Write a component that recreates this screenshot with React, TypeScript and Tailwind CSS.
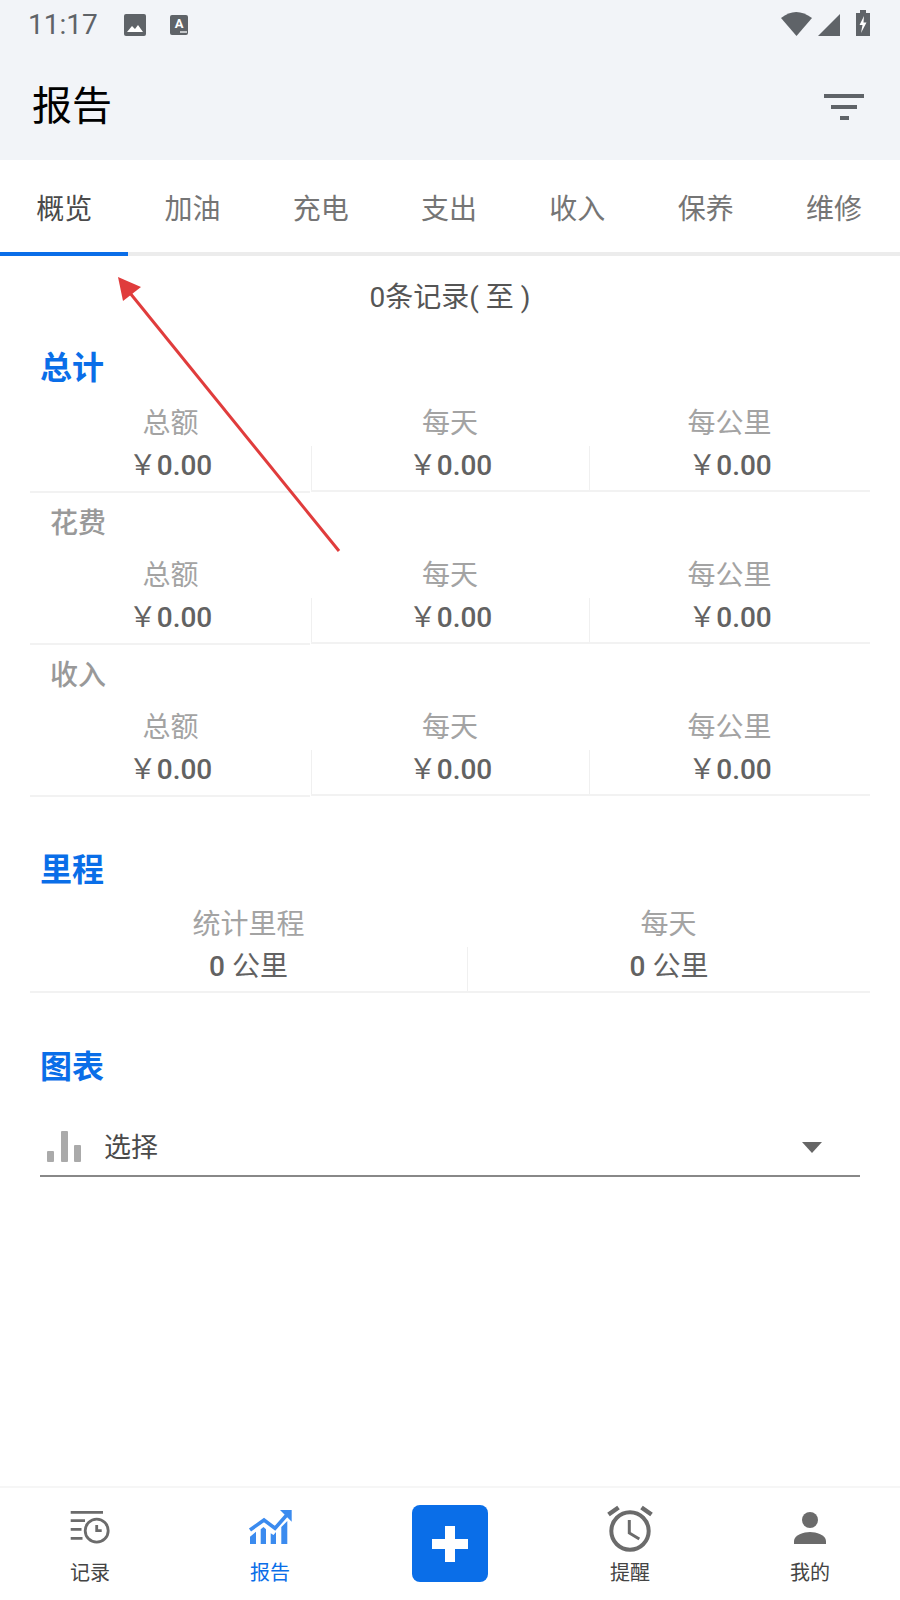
import React from 'react';

const tabs = ['概览', '加油', '充电', '支出', '收入', '保养', '维修'];

const Money: React.FC = () => (
    <>
        <span className="font-normal">￥</span>0.00
    </>
);

const Km: React.FC = () => (
    <>
        0 <span className="font-normal">公里</span>
    </>
);

const StatCell: React.FC<{ label: string; className: string; children: React.ReactNode }> = ({ label, className, children }) => (
    <div className={`flex flex-col items-center ${className}`}>
        <div className="h-[48px] w-full text-center text-[28px] leading-[52px] text-[#a3a3a3]">{label}</div>
        <div className="h-[44px] w-full border-l border-[#f0f0f0] text-center text-[28px] leading-[40px] font-medium text-[#626262]">
            {children}
        </div>
        <div className="h-[2px] w-full bg-[#f2f2f2]" />
    </div>
);

const MoneyRow: React.FC = () => (
    <div className="mx-[30px] flex h-[95px] w-[840px]">
        <div className="flex w-[281px] flex-col">
            <div className="h-[48px] text-center text-[28px] leading-[52px] text-[#a3a3a3]">总额</div>
            <div className="h-[45px] text-center text-[28px] leading-[40px] font-medium text-[#626262]">
                <Money />
            </div>
            <div className="mr-[1px] h-[2px] bg-[#f2f2f2]" />
        </div>
        <StatCell label="每天" className="w-[278px]">
            <Money />
        </StatCell>
        <StatCell label="每公里" className="w-[281px]">
            <Money />
        </StatCell>
    </div>
);

const SectionTitle: React.FC<{ children: React.ReactNode; className?: string }> = ({ children, className }) => (
    <div className={`h-[60px] pl-[40px] text-[32px] leading-[60px] font-bold text-[#0a6ee8] ${className ?? ''}`}>{children}</div>
);

const SubTitle: React.FC<{ children: React.ReactNode }> = ({ children }) => (
    <div className="h-[57px] pl-[50px] text-[28px] leading-[62px] font-medium text-[#999999]">{children}</div>
);

const NavItem: React.FC<{ label: string; active?: boolean; children: React.ReactNode }> = ({ label, active, children }) => (
    <div className="flex w-[180px] flex-col items-center">
        <svg width="50" height="50" viewBox="0 0 50 50">{children}</svg>
        <div className={`mt-[4px] text-[20px] leading-[28px] ${active ? 'text-[#0a6ee8]' : 'text-[#444444]'}`}>{label}</div>
    </div>
);

const App: React.FC = () => {
    return (
        <div className="relative flex h-[1600px] w-[900px] flex-col overflow-hidden bg-white font-['Roboto','Noto_Sans_CJK_SC',sans-serif]">
            <header className="h-[160px] bg-[#f2f4f8]">
                <div className="flex h-[50px] items-center pl-[28px] pr-[30px] text-[#5f6368]">
                    <span className="w-[96px] text-[28px] leading-[54px]">11:17</span>
                    <svg width="22" height="22" viewBox="0 0 22 22" className="mt-[-1px]">
                        <rect width="22" height="22" rx="2" fill="#5f6368" />
                        <path d="M3 18 L8 12 L11 15 L14 11 L19 18 Z" fill="#fff" />
                    </svg>
                    <div className="relative ml-[24px] mt-[-1px] flex h-[20px] w-[18px] justify-center rounded-[2px] bg-[#5f6368] text-[13px] leading-[18px] font-bold text-white">
                        A
                        <span className="absolute bottom-[2px] right-[1px] h-[2px] w-[7px] bg-[#c5c7ca]" />
                    </div>
                    <div className="flex-1" />
                    <svg width="90" height="30" viewBox="0 0 90 30" className="mt-[-1px]">
                        <path d="M1 8 Q16 -4 32 8 L16.5 26 Z" fill="#5f6368" />
                        <path d="M38 26 L60 4 V26 Z" fill="#5f6368" />
                        <path d="M76 3 H80 V0 H86 V3 H90 V26 H76 Z" fill="#5f6368" />
                        <path d="M84 6 L79.5 15 H82.5 L81 23 L86.5 12.5 H83.5 Z" fill="#fff" />
                    </svg>
                </div>
                <div className="flex h-[110px] items-center justify-between pl-[32px] pr-[36px]">
                    <h1 className="mt-[4px] text-[40px] leading-[50px] font-normal text-black">报告</h1>
                    <svg width="40" height="26" viewBox="0 0 40 26" className="mt-[4px]">
                        <rect x="0" y="0" width="40" height="4" fill="#5f6368" />
                        <rect x="7" y="11" width="26" height="4" fill="#5f6368" />
                        <rect x="16" y="22" width="9" height="4" fill="#5f6368" />
                    </svg>
                </div>
            </header>

            <nav className="flex h-[96px] border-b-4 border-[#ececec]">
                {tabs.map((tab, i) => (
                    <div key={tab} className={`relative w-[128.3px] text-center text-[28px] leading-[100px] ${i === 0 ? 'text-[#4a4a4a]' : 'text-[#757575]'}`}>
                        {tab}
                        {i === 0 && <span className="absolute bottom-[-4px] left-0 h-[4px] w-full bg-[#0a6ee8]" />}
                    </div>
                ))}
            </nav>

            <main className="flex-1">
                <div className="h-[82px] text-center text-[28px] leading-[84px] text-[#555555]">0条记录( 至 )</div>

                <SectionTitle>总计</SectionTitle>
                <MoneyRow />
                <SubTitle>花费</SubTitle>
                <MoneyRow />
                <SubTitle>收入</SubTitle>
                <MoneyRow />

                <SectionTitle className="mt-[41px] pt-[2px]">里程</SectionTitle>
                <div className="mx-[30px] flex h-[95px] w-[840px]">
                    <div className="flex w-[437px] flex-col">
                        <div className="h-[49px] text-center text-[28px] leading-[54px] text-[#a3a3a3]">统计里程</div>
                        <div className="h-[44px] text-center text-[28px] leading-[40px] font-medium text-[#626262]">
                            <Km />
                        </div>
                        <div className="h-[2px] bg-[#f2f2f2]" />
                    </div>
                    <div className="flex w-[403px] flex-col">
                        <div className="h-[49px] text-center text-[28px] leading-[54px] text-[#a3a3a3]">每天</div>
                        <div className="h-[44px] border-l border-[#f0f0f0] text-center text-[28px] leading-[40px] font-medium text-[#626262]">
                            <Km />
                        </div>
                        <div className="h-[2px] bg-[#f2f2f2]" />
                    </div>
                </div>

                <SectionTitle className="mt-[43px] pt-[1px]">图表</SectionTitle>
                <div className="ml-[40px] flex h-[81px] w-[820px] items-center border-b-2 border-[#888888]">
                    <svg width="36" height="32" viewBox="0 0 36 32" className="ml-[6px] mt-[22px]">
                        <rect x="1" y="20" width="7" height="11" rx="1" fill="#aaaaaa" />
                        <rect x="15" y="0" width="7" height="31" rx="1" fill="#aaaaaa" />
                        <rect x="28" y="14" width="7" height="17" rx="1" fill="#aaaaaa" />
                    </svg>
                    <span className="ml-[22px] mt-[24px] text-[27px] leading-[40px] text-[#4a4a4a]">选择</span>
                    <div className="flex-1" />
                    <svg width="20" height="11" viewBox="0 0 20 11" className="mr-[38px] mt-[24px]">
                        <path d="M0 0 H20 L10 11 Z" fill="#666666" />
                    </svg>
                </div>
            </main>

            <footer className="flex h-[114px] border-t-2 border-[#f6f6f6] pt-[17px]">
                <NavItem label="记录">
                    <g stroke="#6b6b6b" strokeWidth="2.8" fill="none">
                        <path d="M5.7 7.3 H38 M5.7 15.7 H20 M5.7 24.3 H16.5 M5.7 33.3 H17.5" />
                        <circle cx="31.7" cy="25.7" r="11.5" fill="#fff" />
                        <path d="M31.7 20 V25.7 H36.7" />
                    </g>
                </NavItem>
                <NavItem label="报告" active>
                    <g fill="#3b8bef">
                        <path d="M5 31.7 L11 26.7 V39 H5 Z" />
                        <path d="M15.7 24.3 L18.5 22 L21 24.3 V39 H15.7 Z" />
                        <path d="M25.7 28.3 L28.5 30 L31 27 V39 H25.7 Z" />
                        <path d="M36.3 22 L42.3 16 V39 H36.3 Z" />
                        <path d="M35 5 H46.7 V16.7 Z" />
                    </g>
                    <path d="M5 25 L19 15 L30 23.3 L43.3 8.3" stroke="#3b8bef" strokeWidth="3.6" fill="none" />
                </NavItem>
                <div className="flex w-[180px] justify-center">
                    <div className="flex h-[77px] w-[76px] items-center justify-center rounded-[8px] bg-[#0a6ee8]">
                        <svg width="36" height="36" viewBox="0 0 36 36">
                            <path d="M13 0 H23 V13 H36 V23 H23 V36 H13 V23 H0 V13 H13 Z" fill="#fff" />
                        </svg>
                    </div>
                </div>
                <NavItem label="提醒">
                    <g stroke="#6b6b6b" fill="none">
                        <circle cx="25" cy="26" r="18.7" strokeWidth="4" />
                        <path d="M3.5 9.5 L13.5 2.5 M46.5 9.5 L36.5 2.5" strokeWidth="4.5" />
                        <path d="M24.3 15 V28 L34.3 34" strokeWidth="3" />
                    </g>
                </NavItem>
                <NavItem label="我的">
                    <circle cx="25" cy="15" r="8" fill="#6b6b6b" />
                    <path d="M9 39 V36 C9 30 19 27 25 27 S41 30 41 36 V39 Z" fill="#6b6b6b" />
                </NavItem>
            </footer>

            {/* annotation arrow on top of the screenshot */}
            <svg width="900" height="1600" viewBox="0 0 900 1600" className="pointer-events-none absolute left-0 top-0">
                <path d="M339 551 L130 293" stroke="#e03c3c" strokeWidth="3" />
                <path d="M118 277 L141 287 L123 301 Z" fill="#e03c3c" />
            </svg>
        </div>
    );
};

export default App;
